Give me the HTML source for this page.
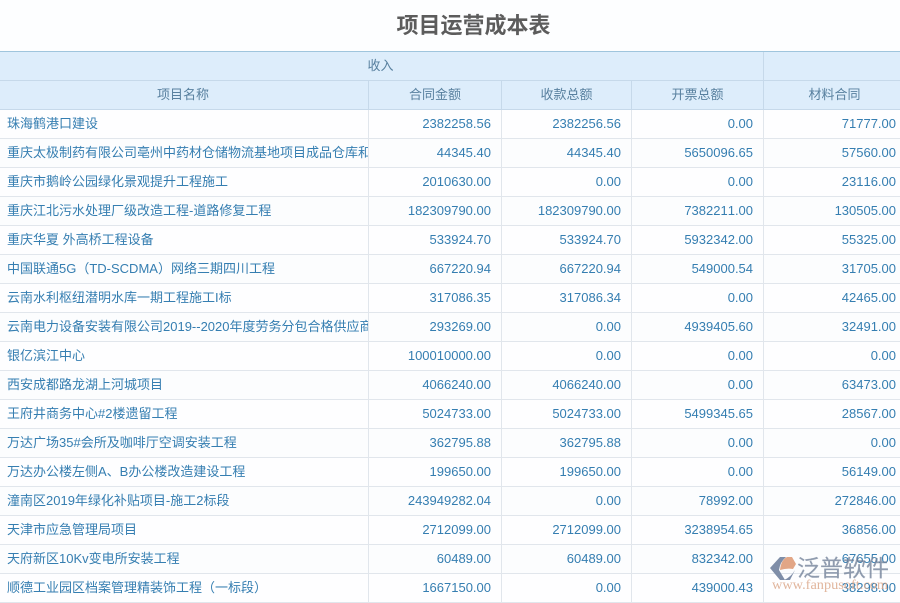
<!DOCTYPE html>
<html><head><meta charset="utf-8"><style>
html,body{margin:0;padding:0;background:#fdfeff}
body{width:900px;height:600px;overflow:hidden;position:relative;font-family:"Liberation Sans","Noto Sans CJK SC",sans-serif}
h1{position:absolute;left:0;top:11px;width:947px;margin:0;text-align:center;font-size:22px;line-height:30px;font-weight:bold;color:#5c5c5c;filter:blur(.3px)}
table{position:absolute;left:0;top:51px;width:900px;border-collapse:separate;border-spacing:0;table-layout:fixed;border-top:1px solid #9fc5dd;font-size:13px;font-kerning:none;filter:blur(.3px)}
td,th{height:28px;padding:0;border-right:1px solid #e1e6ec;border-bottom:1px solid #e1e6ec;overflow:hidden;white-space:nowrap;box-sizing:content-box;line-height:28px}
th{background:#ddedfb;color:#58809f;font-weight:normal;border-color:#c6d9ea}
th.l{padding-right:2px}
th:last-child{padding-left:5px}
td{color:#357eb1;text-align:right;padding-right:10px;background:#fefeff}
td:first-child{text-align:left;padding:0 0 0 7px;width:360px}
td:last-child,th:last-child{border-right:0}
td:last-child{padding-right:4px}
tr:nth-child(even) td{background:#fcfdfe}
.wm{position:absolute;left:765px;top:550px;width:135px;height:50px;filter:blur(.3px)}
</style></head><body>
<h1>项目运营成本表</h1>
<table>
<colgroup><col style="width:369px"><col style="width:133px"><col style="width:130px"><col style="width:132px"><col style="width:136px"></colgroup>
<thead>
<tr><th colspan="4" class="l">收入</th><th></th></tr>
<tr><th class="l">项目名称</th><th>合同金额</th><th>收款总额</th><th>开票总额</th><th>材料合同</th></tr>
</thead>
<tbody>
<tr><td>珠海鹤港口建设</td><td>2382258.56</td><td>2382256.56</td><td>0.00</td><td>71777.00</td></tr>
<tr><td>重庆太极制药有限公司亳州中药材仓储物流基地项目成品仓库和</td><td>44345.40</td><td>44345.40</td><td>5650096.65</td><td>57560.00</td></tr>
<tr><td>重庆市鹅岭公园绿化景观提升工程施工</td><td>2010630.00</td><td>0.00</td><td>0.00</td><td>23116.00</td></tr>
<tr><td>重庆江北污水处理厂级改造工程-道路修复工程</td><td>182309790.00</td><td>182309790.00</td><td>7382211.00</td><td>130505.00</td></tr>
<tr><td>重庆华夏 外高桥工程设备</td><td>533924.70</td><td>533924.70</td><td>5932342.00</td><td>55325.00</td></tr>
<tr><td>中国联通5G（TD-SCDMA）网络三期四川工程</td><td>667220.94</td><td>667220.94</td><td>549000.54</td><td>31705.00</td></tr>
<tr><td>云南水利枢纽潜明水库一期工程施工I标</td><td>317086.35</td><td>317086.34</td><td>0.00</td><td>42465.00</td></tr>
<tr><td>云南电力设备安装有限公司2019--2020年度劳务分包合格供应商</td><td>293269.00</td><td>0.00</td><td>4939405.60</td><td>32491.00</td></tr>
<tr><td>银亿滨江中心</td><td>100010000.00</td><td>0.00</td><td>0.00</td><td>0.00</td></tr>
<tr><td>西安成都路龙湖上河城项目</td><td>4066240.00</td><td>4066240.00</td><td>0.00</td><td>63473.00</td></tr>
<tr><td>王府井商务中心#2楼遗留工程</td><td>5024733.00</td><td>5024733.00</td><td>5499345.65</td><td>28567.00</td></tr>
<tr><td>万达广场35#会所及咖啡厅空调安装工程</td><td>362795.88</td><td>362795.88</td><td>0.00</td><td>0.00</td></tr>
<tr><td>万达办公楼左侧A、B办公楼改造建设工程</td><td>199650.00</td><td>199650.00</td><td>0.00</td><td>56149.00</td></tr>
<tr><td>潼南区2019年绿化补贴项目-施工2标段</td><td>243949282.04</td><td>0.00</td><td>78992.00</td><td>272846.00</td></tr>
<tr><td>天津市应急管理局项目</td><td>2712099.00</td><td>2712099.00</td><td>3238954.65</td><td>36856.00</td></tr>
<tr><td>天府新区10Kv变电所安装工程</td><td>60489.00</td><td>60489.00</td><td>832342.00</td><td>67655.00</td></tr>
<tr><td>顺德工业园区档案管理精装饰工程（一标段）</td><td>1667150.00</td><td>0.00</td><td>439000.43</td><td>38298.00</td></tr>
</tbody>
</table>
<svg class="wm" viewBox="0 0 135 50">
<path d="M5 18 L15 7 H21 Q15 12 14 20 L20 30 H15 Z" fill="#7f8ea8"/>
<path d="M15 20 Q16 10 22 7 H27 L31 14 L28 19 Q22 18 15 20 Z" fill="#e2a686"/>
<path d="M19 30 Q26 27 30 20 L25 30 Z" fill="#7f8ea8"/>
<text x="32" y="26" font-size="23" stroke="#74839a" stroke-width=".15" fill="#74839a" opacity=".8" font-family="'Noto Sans CJK SC',sans-serif">泛普软件</text>
<text x="7" y="39" font-size="13.5" font-family="'Liberation Serif',serif" fill="#dca98c" opacity=".85" textLength="116" lengthAdjust="spacingAndGlyphs">www.fanpusoft.com</text>
</svg>
</body></html>
